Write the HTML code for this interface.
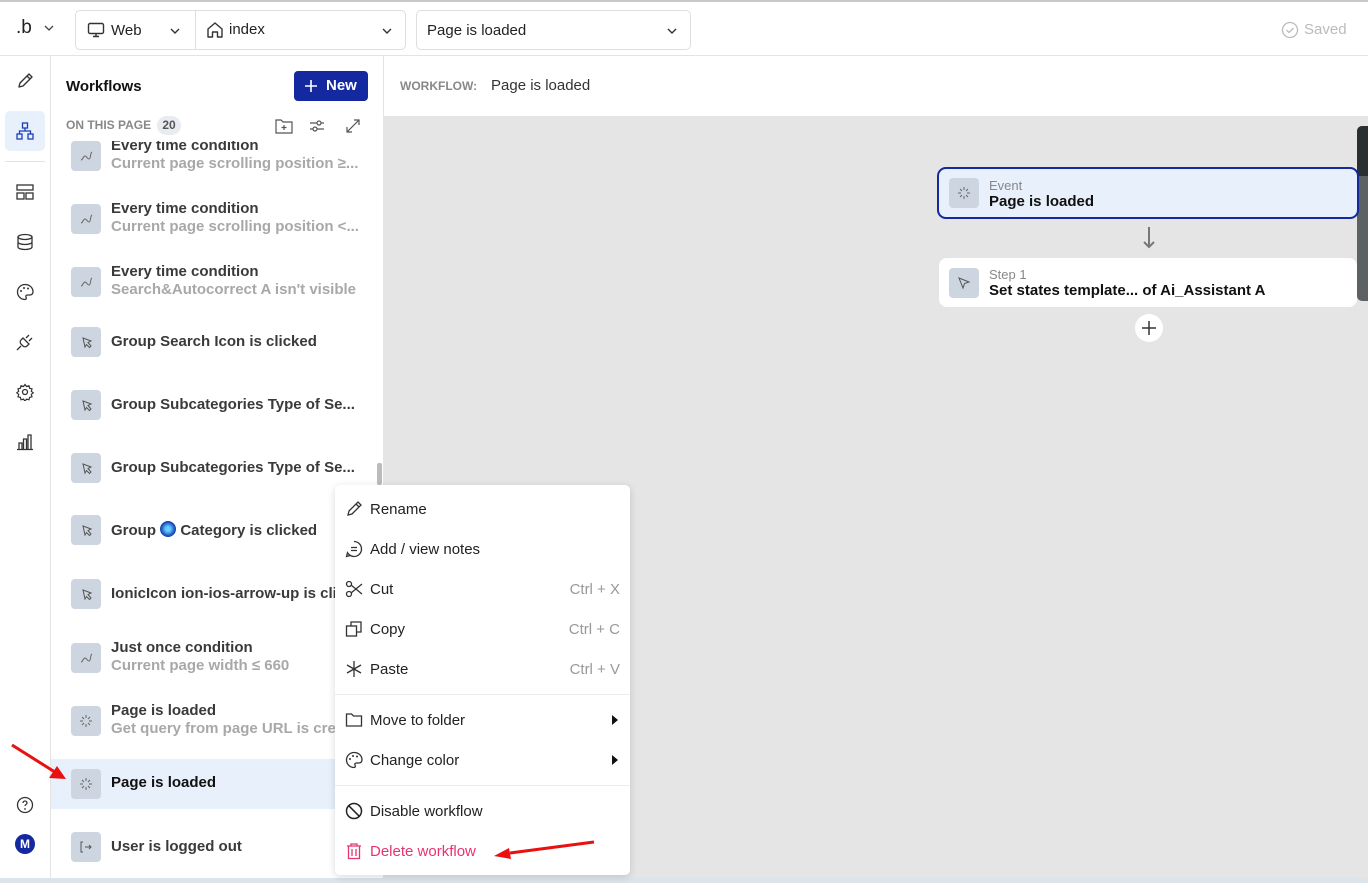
<!DOCTYPE html>
<html><head><meta charset="utf-8"><style>
*{box-sizing:border-box;margin:0;padding:0}
body{width:1368px;height:883px;overflow:hidden;font-family:"Liberation Sans",sans-serif;background:#fff;position:relative;color:#1a1a1a}
.abs{position:absolute}
svg{display:block}
.top{left:0;top:0;width:1368px;height:56px;border-top:2px solid #c8c8c8;border-bottom:1px solid #e3e3e3;background:#fff}
.sel{border:1px solid #dedede;border-radius:5px;height:40px;top:8px;display:flex;align-items:center;font-size:15px;color:#222}
.rail{left:0;top:56px;width:51px;height:822px;border-right:1px solid #e3e3e3}
.panel{left:51px;top:56px;width:332px;height:822px;background:#fff;overflow:hidden}
.row{position:absolute;left:0;width:332px;height:50px}
.ic{position:absolute;left:20px;top:10px;width:30px;height:30px;background:#cdd6e0;border-radius:4px;display:flex;align-items:center;justify-content:center}
.t1{position:absolute;left:60px;font-size:15px;color:#3a3a3a;white-space:nowrap;font-weight:bold}
.t2{position:absolute;left:60px;font-size:15px;color:#a8a8a8;white-space:nowrap;font-weight:bold}
.menu{left:335px;top:485px;width:295px;height:390px;background:#fff;border-radius:5px;box-shadow:0 2px 8px rgba(0,0,0,.15)}
.mi{position:absolute;left:10px;width:275px;height:24px;display:flex;align-items:center;font-size:15px;color:#222}
.mi svg{margin-right:7px}
.mi .k{position:absolute;right:0;color:#999;font-size:15px}
.div{position:absolute;left:0;width:295px;height:1px;background:#ececec}
</style></head><body>
<div class="abs top">
 <div class="abs" style="left:16px;top:15px;font-size:19px;color:#222">.b</div>
 <svg class="abs" style="left:44px;top:22px" width="10" height="8"><path d="M1 2l4 4 4-4" stroke="#444" fill="none" stroke-width="1.3"/></svg>
 <div class="abs sel" style="left:75px;width:331px">
  <svg style="margin-left:11px" width="18" height="16"><rect x="1.5" y="1.5" width="15" height="10" rx="1.5" stroke="#333" fill="none" stroke-width="1.4"/><path d="M6 14.5h6M9 11.5v3" stroke="#333" stroke-width="1.4"/></svg>
  <span style="margin-left:6px">Web</span>
  <svg class="abs" style="left:94px;top:16px" width="10" height="8"><path d="M1 2l4 4 4-4" stroke="#333" fill="none" stroke-width="1.4"/></svg>
  <div class="abs" style="left:119px;top:0;width:1px;height:38px;background:#dedede"></div>
  <svg class="abs" style="left:130px;top:10px" width="18" height="18"><path d="M2 8l7-6 7 6v8h-4.5v-5h-5v5H2z" stroke="#333" fill="none" stroke-width="1.4" stroke-linejoin="round"/></svg>
  <span class="abs" style="left:153px;top:10px">index</span>
  <svg class="abs" style="left:306px;top:16px" width="10" height="8"><path d="M1 2l4 4 4-4" stroke="#333" fill="none" stroke-width="1.4"/></svg>
 </div>
 <div class="abs sel" style="left:416px;width:275px"><span style="margin-left:10px">Page is loaded</span>
  <svg class="abs" style="left:250px;top:16px" width="10" height="8"><path d="M1 2l4 4 4-4" stroke="#333" fill="none" stroke-width="1.4"/></svg></div>
 <svg class="abs" style="left:1281px;top:19px" width="18" height="18"><circle cx="9" cy="9" r="7.5" stroke="#bbb" fill="none" stroke-width="1.3"/><path d="M5.5 9l2.5 2.5 4.5-4.5" stroke="#bbb" fill="none" stroke-width="1.3"/></svg>
 <div class="abs" style="left:1304px;top:19px;font-size:15px;color:#bbb">Saved</div>
</div>

<div class="abs rail">
 <svg class="abs" style="left:16px;top:16px" width="18" height="18"><path d="M3 15l1-4 9-9 3 3-9 9z M11 4l3 3" stroke="#333" fill="none" stroke-width="1.4" stroke-linejoin="round"/></svg>
 <div class="abs" style="left:5px;top:55px;width:40px;height:40px;background:#e8f0fb;border-radius:5px"></div>
 <svg class="abs" style="left:16px;top:66px" width="18" height="18"><rect x="6.5" y="1" width="5" height="5" stroke="#1a3fb5" fill="none" stroke-width="1.3"/><rect x="1" y="12" width="5" height="5" stroke="#1a3fb5" fill="none" stroke-width="1.3"/><rect x="12" y="12" width="5" height="5" stroke="#1a3fb5" fill="none" stroke-width="1.3"/><path d="M9 6v3M3.5 12V9h11v3" stroke="#1a3fb5" fill="none" stroke-width="1.3"/></svg>
 <div class="abs" style="left:5px;top:105px;width:40px;height:1px;background:#e3e3e3"></div>
 <svg class="abs" style="left:16px;top:127px" width="18" height="18"><rect x="1" y="2" width="16" height="5" stroke="#333" fill="none" stroke-width="1.3"/><rect x="1" y="10" width="7" height="6" stroke="#333" fill="none" stroke-width="1.3"/><rect x="10" y="10" width="7" height="6" stroke="#333" fill="none" stroke-width="1.3"/></svg>
 <svg class="abs" style="left:16px;top:177px" width="18" height="18"><ellipse cx="9" cy="4" rx="7" ry="2.5" stroke="#333" fill="none" stroke-width="1.3"/><path d="M2 4v10c0 1.4 3 2.5 7 2.5s7-1.1 7-2.5V4M2 9c0 1.4 3 2.5 7 2.5s7-1.1 7-2.5" stroke="#333" fill="none" stroke-width="1.3"/></svg>
 <svg class="abs" style="left:16px;top:227px" width="18" height="18"><path d="M9 1.5a7.5 7.5 0 100 15c1.5 0 1.5-1.5 1-2.5s0-2 1.5-2H14a3 3 0 003-3C17 4.5 13.5 1.5 9 1.5z" stroke="#333" fill="none" stroke-width="1.3"/><circle cx="5" cy="8" r="1" fill="#333"/><circle cx="8" cy="5" r="1" fill="#333"/><circle cx="12" cy="5.5" r="1" fill="#333"/></svg>
 <svg class="abs" style="left:16px;top:277px" width="18" height="18"><path d="M1 17l4-4M7 5l6 6-2 2a3 3 0 01-4 0l-2-2a3 3 0 010-4zM10 5l3-3M13 8l3-3" stroke="#333" fill="none" stroke-width="1.3"/></svg>
 <svg class="abs" style="left:16px;top:327px" width="18" height="18"><circle cx="9" cy="9" r="2.5" stroke="#333" fill="none" stroke-width="1.3"/><path d="M9 1.5l1.5 2 2.5-.7.6 2.4 2.4.6-.7 2.5 2 1.5-2 1.5.7 2.5-2.4.6-.6 2.4-2.5-.7-1.5 2-1.5-2-2.5.7-.6-2.4-2.4-.6.7-2.5-2-1.5 2-1.5-.7-2.5 2.4-.6.6-2.4 2.5.7z" stroke="#333" fill="none" stroke-width="1.2"/></svg>
 <svg class="abs" style="left:16px;top:377px" width="18" height="18"><path d="M1 16.5h16M3 16V10h3v6M7.5 16V6h3v10M12 16V2h3v14" stroke="#333" fill="none" stroke-width="1.3"/></svg>
 <svg class="abs" style="left:16px;top:740px" width="18" height="18"><circle cx="9" cy="9" r="7.5" stroke="#333" fill="none" stroke-width="1.3"/><path d="M7 7a2 2 0 114 0c0 1.5-2 1.5-2 3" stroke="#333" fill="none" stroke-width="1.3"/><circle cx="9" cy="13" r=".9" fill="#333"/></svg>
 <div class="abs" style="left:15px;top:778px;width:20px;height:20px;border-radius:50%;background:#1428a0;color:#fff;font-size:12px;font-weight:bold;text-align:center;line-height:20px">M</div>
</div>

<div class="abs panel">
 <div class="abs" style="left:15px;top:22px;font-size:15px;font-weight:bold;color:#111">Workflows</div>
 <div class="abs" style="left:243px;top:15px;width:74px;height:30px;background:#1428a0;border-radius:4px;color:#fff;font-size:15px;font-weight:bold;line-height:30px;padding-left:32px">New</div>
 <svg class="abs" style="left:253px;top:23px" width="14" height="14"><path d="M7 1v12M1 7h12" stroke="#fff" stroke-width="1.6"/></svg>
 <div class="abs" style="left:15px;top:62px;font-size:12px;color:#888;font-weight:bold">ON THIS PAGE</div>
 <div class="abs" style="left:106px;top:60px;width:24px;height:19px;border-radius:10px;background:#e8ecf1;font-size:12px;color:#555;text-align:center;line-height:19px;font-weight:bold">20</div>
 <svg class="abs" style="left:224px;top:62px" width="18" height="16"><path d="M1 2h5l2 2h9v11H1z M9 7v5M6.5 9.5h5" stroke="#555" fill="none" stroke-width="1.2"/></svg>
 <svg class="abs" style="left:258px;top:62px" width="16" height="16"><path d="M1 5h14M1 11h14" stroke="#555" stroke-width="1.2"/><circle cx="10" cy="5" r="2" fill="#fff" stroke="#555" stroke-width="1.2"/><circle cx="6" cy="11" r="2" fill="#fff" stroke="#555" stroke-width="1.2"/></svg>
 <svg class="abs" style="left:294px;top:62px" width="16" height="16"><path d="M2 14L14 2M9 2h5v5M2 9v5h5" stroke="#555" fill="none" stroke-width="1.2"/></svg>
 <div class="abs" style="left:0;top:85px;width:332px;height:737px;overflow:hidden">
  <div class="row" style="top:-10px"><div class="ic"><svg width="14" height="14"><path d="M2 11c2 0 2-4 4-4s2 3 4 3 1-6 3-7" stroke="#666" fill="none" stroke-width="1"/></svg></div><div class="t1" style="top:6px">Every time condition</div><div class="t2" style="top:24px">Current page scrolling position ≥...</div></div>
  <div class="row" style="top:53px"><div class="ic"><svg width="14" height="14"><path d="M2 11c2 0 2-4 4-4s2 3 4 3 1-6 3-7" stroke="#666" fill="none" stroke-width="1"/></svg></div><div class="t1" style="top:6px">Every time condition</div><div class="t2" style="top:24px">Current page scrolling position &lt;...</div></div>
  <div class="row" style="top:116px"><div class="ic"><svg width="14" height="14"><path d="M2 11c2 0 2-4 4-4s2 3 4 3 1-6 3-7" stroke="#666" fill="none" stroke-width="1"/></svg></div><div class="t1" style="top:6px">Every time condition</div><div class="t2" style="top:24px">Search&amp;Autocorrect A isn't visible</div></div>
  <div class="row" style="top:176px"><div class="ic"><svg width="14" height="14"><path d="M4 3l8 3-3 1.5L12 11l-1.5 1.5-3-3L6 12z" stroke="#555" fill="none" stroke-width="1"/></svg></div><div class="t1" style="top:16px">Group Search Icon is clicked</div></div>
  <div class="row" style="top:239px"><div class="ic"><svg width="14" height="14"><path d="M4 3l8 3-3 1.5L12 11l-1.5 1.5-3-3L6 12z" stroke="#555" fill="none" stroke-width="1"/></svg></div><div class="t1" style="top:16px">Group Subcategories Type of Se...</div></div>
  <div class="row" style="top:302px"><div class="ic"><svg width="14" height="14"><path d="M4 3l8 3-3 1.5L12 11l-1.5 1.5-3-3L6 12z" stroke="#555" fill="none" stroke-width="1"/></svg></div><div class="t1" style="top:16px">Group Subcategories Type of Se...</div></div>
  <div class="row" style="top:364px"><div class="ic"><svg width="14" height="14"><path d="M4 3l8 3-3 1.5L12 11l-1.5 1.5-3-3L6 12z" stroke="#555" fill="none" stroke-width="1"/></svg></div><div class="t1" style="top:16px">Group <span style="display:inline-block;width:16px;height:16px;border-radius:50%;background:radial-gradient(circle,#6cf 20%,#1a4fc0 60%,#123);vertical-align:-2px"></span> Category is clicked</div></div>
  <div class="row" style="top:428px"><div class="ic"><svg width="14" height="14"><path d="M4 3l8 3-3 1.5L12 11l-1.5 1.5-3-3L6 12z" stroke="#555" fill="none" stroke-width="1"/></svg></div><div class="t1" style="top:16px">IonicIcon ion-ios-arrow-up is clic</div></div>
  <div class="row" style="top:492px"><div class="ic"><svg width="14" height="14"><path d="M2 11c2 0 2-4 4-4s2 3 4 3 1-6 3-7" stroke="#666" fill="none" stroke-width="1"/></svg></div><div class="t1" style="top:6px">Just once condition</div><div class="t2" style="top:24px">Current page width ≤ 660</div></div>
  <div class="row" style="top:555px"><div class="ic"><svg width="14" height="14"><path d="M7 1v3M7 10v3M1 7h3M10 7h3M3 3l2 2M9 9l2 2M11 3L9 5M5 9l-2 2" stroke="#666" stroke-width="1"/></svg></div><div class="t1" style="top:6px">Page is loaded</div><div class="t2" style="top:24px">Get query from page URL is cre</div></div>
  <div class="row" style="top:618px;background:#e8f0fb"><div class="ic"><svg width="14" height="14"><path d="M7 1v3M7 10v3M1 7h3M10 7h3M3 3l2 2M9 9l2 2M11 3L9 5M5 9l-2 2" stroke="#666" stroke-width="1"/></svg></div><div class="t1" style="top:15px;color:#111">Page is loaded</div></div>
  <div class="row" style="top:681px"><div class="ic"><svg width="14" height="14"><path d="M4 2H2v10h2M6 7h6M10 5l2 2-2 2" stroke="#555" fill="none" stroke-width="1"/></svg></div><div class="t1" style="top:16px">User is logged out</div></div>
 </div>
 <div class="abs" style="left:326px;top:407px;width:5px;height:22px;background:#bbb;border-radius:2px"></div>
</div>

<div class="abs" style="left:383px;top:56px;width:985px;height:60px;background:#fff;border-left:1px solid #e3e3e3">
 <div class="abs" style="left:16px;top:23px;font-size:12px;color:#888;font-weight:bold">WORKFLOW:</div>
 <div class="abs" style="left:107px;top:21px;font-size:15px;color:#333">Page is loaded</div>
</div>
<div class="abs" style="left:383px;top:116px;width:985px;height:762px;background:#e5e5e5"></div>
<div class="abs" style="left:1357px;top:126px;width:11px;height:175px;background:#5c6164;border-radius:5px 0 0 5px"></div>
<div class="abs" style="left:1357px;top:126px;width:11px;height:50px;background:#2a2f31;border-radius:5px 0 0 0"></div>

<div class="abs" style="left:937px;top:167px;width:422px;height:52px;background:#e8f0fb;border:2px solid #1428a0;border-radius:9px">
 <div class="abs" style="left:10px;top:9px;width:30px;height:30px;background:#cdd6e0;border-radius:4px;display:flex;align-items:center;justify-content:center"><svg width="14" height="14"><path d="M7 1v3M7 10v3M1 7h3M10 7h3M3 3l2 2M9 9l2 2M11 3L9 5M5 9l-2 2" stroke="#666" stroke-width="1"/></svg></div>
 <div class="abs" style="left:50px;top:9px;font-size:13px;color:#888">Event</div>
 <div class="abs" style="left:50px;top:24px;font-size:15px;color:#111;font-weight:bold">Page is loaded</div>
</div>
<svg class="abs" style="left:1142px;top:227px" width="14" height="24"><path d="M7 0v20M2 15l5 5 5-5" stroke="#777" fill="none" stroke-width="2"/></svg>
<div class="abs" style="left:939px;top:258px;width:418px;height:49px;background:#fff;border-radius:8px">
 <div class="abs" style="left:10px;top:10px;width:30px;height:30px;background:#cdd6e0;border-radius:4px;display:flex;align-items:center;justify-content:center"><svg width="14" height="14"><path d="M2 2l10 4-4.5 1.5L6 12z" stroke="#555" fill="none" stroke-width="1"/></svg></div>
 <div class="abs" style="left:50px;top:9px;font-size:13px;color:#888">Step 1</div>
 <div class="abs" style="left:50px;top:24px;font-size:15px;color:#111;font-weight:bold">Set states template... of Ai_Assistant A</div>
</div>
<div class="abs" style="left:1135px;top:314px;width:28px;height:28px;border-radius:50%;background:#fff"></div>
<svg class="abs" style="left:1142px;top:321px" width="14" height="14"><path d="M7 0v14M0 7h14" stroke="#333" stroke-width="1.5"/></svg>

<div class="abs" style="left:0;top:878px;width:1368px;height:5px;background:#dde4ea"></div>

<div class="abs menu">
 <div class="mi" style="top:12px"><svg width="18" height="18"><path d="M3 15l1-4 9-9 3 3-9 9z M11 4l3 3" stroke="#333" fill="none" stroke-width="1.3"/></svg>Rename</div>
 <div class="mi" style="top:52px"><svg width="18" height="18"><path d="M9 1.5a7.5 7.5 0 11-6.5 11.2L1.5 16.5l3.8-1A7.5 7.5 0 009 16.5" stroke="#333" fill="none" stroke-width="1.3"/><path d="M6 7.5h6M6 10.5h6" stroke="#333" stroke-width="1.3"/></svg>Add / view notes</div>
 <div class="mi" style="top:92px"><svg width="18" height="18"><circle cx="4" cy="4" r="2.5" stroke="#333" fill="none" stroke-width="1.3"/><circle cx="4" cy="14" r="2.5" stroke="#333" fill="none" stroke-width="1.3"/><path d="M6 5l11 9M6 13L17 4" stroke="#333" stroke-width="1.3"/></svg>Cut<span class="k">Ctrl + X</span></div>
 <div class="mi" style="top:132px"><svg width="18" height="18"><rect x="1.5" y="6" width="10" height="10" stroke="#333" fill="none" stroke-width="1.3"/><path d="M6 6V2h10v10h-4.5" stroke="#333" fill="none" stroke-width="1.3"/></svg>Copy<span class="k">Ctrl + C</span></div>
 <div class="mi" style="top:172px"><svg width="18" height="18"><path d="M9 1v16M2 5l14 8M2 13l14-8" stroke="#333" stroke-width="1.3"/></svg>Paste<span class="k">Ctrl + V</span></div>
 <div class="div" style="top:209px"></div>
 <div class="mi" style="top:223px"><svg width="18" height="18"><path d="M1.5 3h5l2 2h8v10h-15z" stroke="#333" fill="none" stroke-width="1.3"/></svg>Move to folder<svg class="abs" style="right:2px;left:auto;margin:0" width="6" height="10"><path d="M0 0l6 5-6 5z" fill="#111"/></svg></div>
 <div class="mi" style="top:263px"><svg width="18" height="18"><path d="M9 1.5a7.5 7.5 0 100 15c1.5 0 1.5-1.5 1-2.5s0-2 1.5-2H14a3 3 0 003-3C17 4.5 13.5 1.5 9 1.5z" stroke="#333" fill="none" stroke-width="1.3"/><circle cx="5" cy="8" r="1" fill="#333"/><circle cx="8" cy="5" r="1" fill="#333"/><circle cx="12" cy="5.5" r="1" fill="#333"/></svg>Change color<svg class="abs" style="right:2px;left:auto;margin:0" width="6" height="10"><path d="M0 0l6 5-6 5z" fill="#111"/></svg></div>
 <div class="div" style="top:300px"></div>
 <div class="mi" style="top:314px"><svg width="18" height="18"><circle cx="9" cy="9" r="7.5" stroke="#222" fill="none" stroke-width="1.5"/><path d="M3.7 3.7l10.6 10.6" stroke="#222" stroke-width="1.5"/></svg>Disable workflow</div>
 <div class="mi" style="top:354px;color:#e8336d"><svg width="18" height="18"><path d="M2 4h14M6 4V2h6v2M3.5 4v12.5h11V4M7 7v7M11 7v7" stroke="#e8336d" fill="none" stroke-width="1.3"/></svg>Delete workflow</div>
</div>

<svg class="abs" style="left:0;top:0;pointer-events:none" width="1368" height="883">
 <path d="M12 745L58 774" stroke="#e81010" stroke-width="3"/><path d="M66 779l-17-1 8-12z" fill="#e81010"/>
 <path d="M594 842L510 853" stroke="#e81010" stroke-width="3"/><path d="M494 856l15-8 2 11z" fill="#e81010"/>
</svg>
</body></html>
